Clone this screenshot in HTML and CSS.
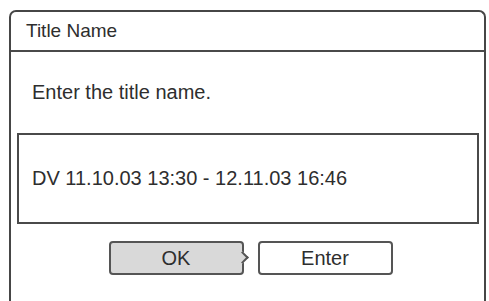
FILE: index.html
```html
<!DOCTYPE html>
<html lang="en">
<head>
    <meta charset="UTF-8">
    <meta name="viewport" content="width=device-width, initial-scale=1.0">
    <title>Title Name</title>
    <link rel="stylesheet" href="styles.css">
</head>
<body>
    <div class="dialog">
        <div class="header">Title Name</div>
        <div class="content">
            <p class="prompt">Enter the title name.</p>
            <div class="name-box">DV 11.10.03 13:30 - 12.11.03 16:46</div>
            <div class="buttons">
                <a class="button ok">OK</a>
                <a class="button enter">Enter</a>
            </div>
        </div>
    </div>
</body>
</html>
```

FILE: styles.css
```css
body {
    margin: 0;
    background-color: #fff;
    font-family: "Liberation Sans", Arial, sans-serif;
    color: #2e2e2e;
    overflow: hidden;
}

.dialog {
    margin: 10px 0 0 9px;
    width: 473px;
    height: 289px; /* 画面下端まで */
    border: 2px solid #464646;
    border-bottom: none;
    border-radius: 7px 7px 0 0;
}

.header {
    height: 38px;
    display: flex;
    align-items: center;
    padding-left: 15px;
    font-size: 19px;
    border-bottom: 2px solid #4a4a4a;
}

.content {
    padding: 0 5px 0 6px;
}

.prompt {
    margin: 28px 0 29px 15px;
    font-size: 20px;
    line-height: 24px;
}

.name-box {
    height: 87px;
    border: 2px solid #4a4a4a;
    display: flex;
    align-items: center;
    padding-left: 13px;
    font-size: 20px;
}

.buttons {
    display: flex;
    justify-content: center;
    gap: 14px;
    margin-top: 17px;
    padding-left: 5px;
}

.button {
    position: relative;
    width: 131px;
    height: 30px;
    border: 2px solid #555;
    border-radius: 4px;
    display: flex;
    align-items: center;
    justify-content: center;
    font-size: 20px;
    color: #2e2e2e;
    text-decoration: none;
}

.ok {
    background-color: #d9d9d9;
}

/* 右側の矢印 */
.ok::after {
    content: "";
    position: absolute;
    right: -5px;
    top: 10px;
    width: 7px;
    height: 7px;
    background-color: #d9d9d9;
    border-top: 2px solid #555;
    border-right: 2px solid #555;
    transform: rotate(45deg);
}

.enter {
    background-color: #fff;
}
```
